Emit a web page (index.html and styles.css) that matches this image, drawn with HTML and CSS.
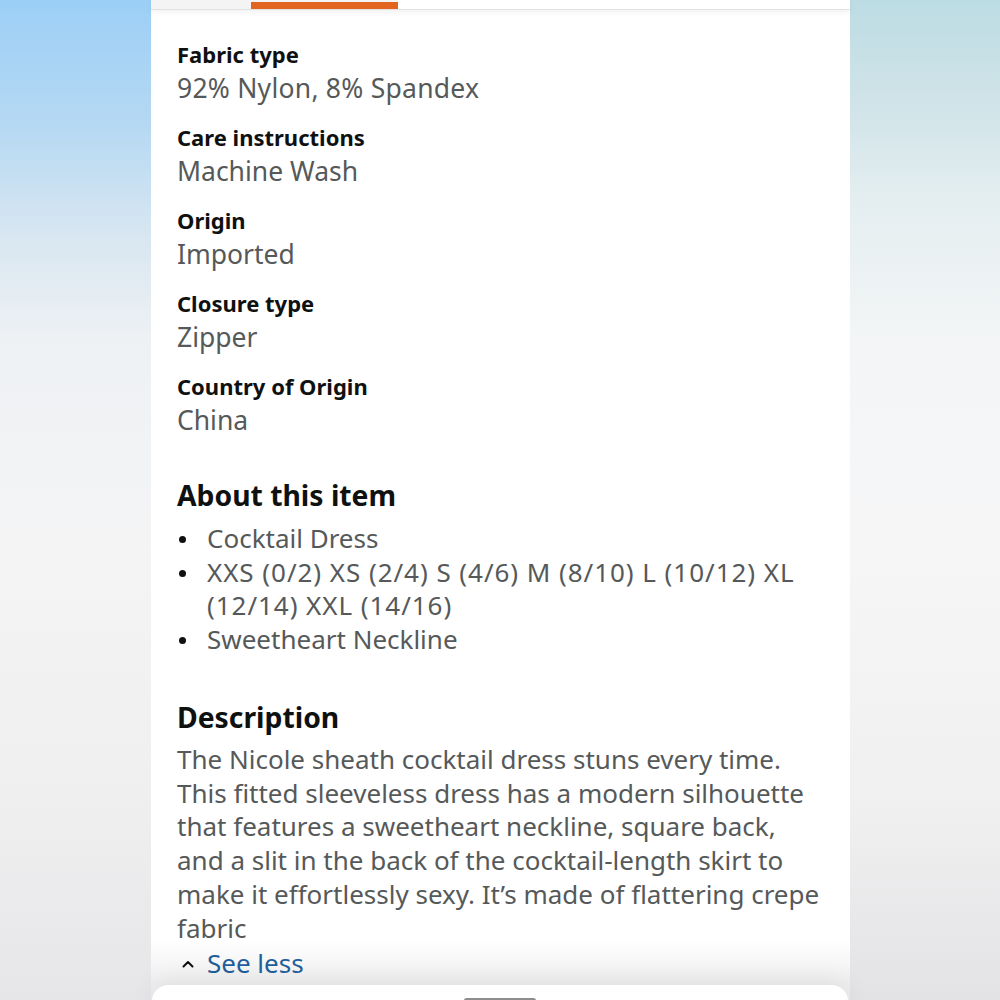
FILE: index.html
```html
<!DOCTYPE html>
<html lang="en">
<head>
<meta charset="utf-8">
<title>Product details</title>
<link rel="stylesheet" href="styles.css">
</head>
<body>
<div class="page">
  <div class="side side-left"></div>
  <main class="card">
    <div class="tabs">
      <div class="tab tab-first"></div>
      <div class="tab tab-active"></div>
      <div class="tab tab-rest"></div>
    </div>
    <div class="content">
      <dl class="facts">
        <div class="fact"><dt>Fabric type</dt><dd class="numeric">92% Nylon, 8% Spandex</dd></div>
        <div class="fact"><dt>Care instructions</dt><dd>Machine Wash</dd></div>
        <div class="fact"><dt>Origin</dt><dd>Imported</dd></div>
        <div class="fact"><dt>Closure type</dt><dd>Zipper</dd></div>
        <div class="fact"><dt>Country of Origin</dt><dd>China</dd></div>
      </dl>
      <h2 class="heading heading-about">About this item</h2>
      <ul class="bullets">
        <li><span class="dot"></span><span class="btext">Cocktail Dress</span></li>
        <li><span class="dot"></span><span class="btext sizes">XXS (0/2) XS (2/4) S (4/6) M (8/10) L (10/12) XL (12/14) XXL (14/16)</span></li>
        <li><span class="dot"></span><span class="btext">Sweetheart Neckline</span></li>
      </ul>
      <h2 class="heading heading-desc">Description</h2>
      <p class="desc">The Nicole sheath cocktail dress stuns every time. This fitted sleeveless dress has a modern silhouette that features a sweetheart neckline, square back, and a slit in the back of the cocktail-length skirt to make it effortlessly sexy. It’s made of flattering crepe fabric</p>
      <a class="see-less" href="#"><svg class="caret" width="12" height="8" viewBox="0 0 12 8"><path d="M1.5 6.5 L6 2 L10.5 6.5" fill="none" stroke="#0f1111" stroke-width="2" stroke-linecap="round" stroke-linejoin="round"/></svg><span>See less</span></a>
    </div>
  </main>
  <div class="side side-right"></div>
  <div class="sheet"><span class="handle"></span></div>
</div>
</body>
</html>
```
FILE: styles.css
```css
html, body {
  margin: 0;
  padding: 0;
}
body {
  font-family: "Noto Sans", "Open Sans", sans-serif;
  background: #f1f1f2;
}
.page {
  position: relative;
  display: flex;
  width: 1000px;
  height: 1000px;
  overflow: hidden;
}
.side {
  flex: none;
  height: 1000px;
}
.side-left {
  width: 151px;
  background: linear-gradient(180deg, #9ccff6 0%, #b4d8f3 12%, #d9e7f1 24%, #eef1f4 34%, #f4f4f5 55%, #efeff0 80%, #e6e6e8 100%);
}
.side-right {
  width: 150px;
  background: linear-gradient(180deg, #bcdce3 0%, #cfe3e8 10%, #e4eef0 20%, #f3f5f6 34%, #f6f6f7 55%, #f0f0f1 80%, #e3e3e5 100%);
}
.card {
  flex: none;
  width: 699px;
  height: 1000px;
  background: linear-gradient(180deg, #ffffff 0%, #ffffff 94%, #eeeeee 98.5%);
}
.tabs {
  display: flex;
  height: 9px;
  box-shadow: 0 1px 0 #e2e2e2, 0 3px 6px rgba(0,0,0,0.06);
  position: relative;
}
.tab-first {
  width: 100px;
  background: #f3f4f3;
}
.tab-active {
  width: 147px;
  background: linear-gradient(180deg, #f3f4f3 0 2px, #e1651f 2px 100%);
}
.tab-rest {
  flex: 1;
  background: #ffffff;
}
.content {
  padding: 28px 0 0 26px;
  width: 650px;
}
.facts {
  margin: 0;
  display: flex;
  flex-direction: column;
  gap: 15px;
}
.fact dt {
  font-weight: 700;
  font-size: 22px;
  line-height: 34px;
  color: #0f1111;
}
.fact dd {
  margin: 0;
  font-size: 26.5px;
  line-height: 34px;
  color: #565959;
}
.fact dd.numeric {
  letter-spacing: 0.25px;
}
.heading {
  margin: 0;
  font-weight: 700;
  font-size: 28.3px;
  line-height: 36px;
  color: #0f1111;
}
.heading-about {
  margin-top: 40px;
}
.bullets {
  list-style: none;
  margin: 9px 0 0 0;
  padding: 0;
}
.bullets li {
  display: flex;
  align-items: flex-start;
  font-size: 26px;
  line-height: 33.7px;
  color: #565959;
}
.dot {
  flex: none;
  width: 7px;
  height: 7px;
  border-radius: 50%;
  background: #0f1111;
  margin: 14px 21px 0 2px;
}
.btext {
  flex: 1;
}
.btext.sizes {
  letter-spacing: 0.95px;
}
.heading-desc {
  margin-top: 42px;
}
.desc {
  margin: 8px 0 0 0;
  font-size: 26px;
  line-height: 33.8px;
  color: #565959;
}
.see-less {
  display: flex;
  align-items: center;
  text-decoration: none;
  color: #1f5f9c;
  font-size: 26px;
  line-height: 34px;
}
.caret {
  flex: none;
  margin: 2px 13px 0 5px;
}
.sheet {
  position: absolute;
  left: 152px;
  top: 985px;
  width: 696px;
  height: 40px;
  background: #ffffff;
  border-radius: 16px 16px 0 0;
  box-shadow: 0 -6px 24px rgba(0,0,0,0.06);
  display: flex;
  justify-content: center;
}
.handle {
  width: 72px;
  height: 5px;
  margin-top: 13px;
  border-radius: 3px;
  background: #8d8d8d;
}
```
